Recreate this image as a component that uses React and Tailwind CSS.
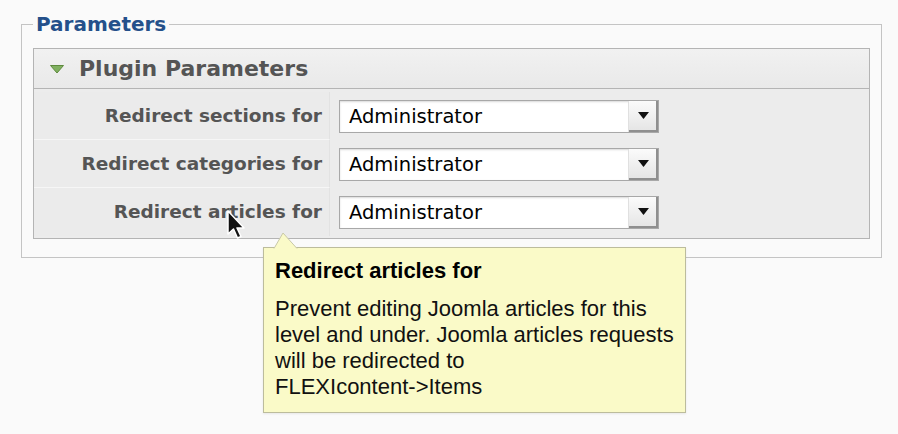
import React from "react";

const rows = ["Redirect sections for", "Redirect categories for", "Redirect articles for"];

const SelectBox = () => (
  <div className="flex h-[33px] w-[320px] items-stretch border border-[#a8a8a8] bg-white shadow-[inset_0_1px_2px_rgba(0,0,0,0.15)]">
    <div className="flex-1 pl-[9px] text-[19.5px] leading-[31px] text-black [font-family:'DejaVu_Sans',sans-serif]">
      Administrator
    </div>
    <div className="flex w-[30px] items-center justify-center border-l border-[#e0e0e0] bg-gradient-to-b from-[#fbfbfb] to-[#e4e4e4] shadow-[inset_-2px_-2px_0_#8f8f8f]">
      <svg width="11" height="8" viewBox="0 0 11 8">
        <path d="M0 0 L11 0 L5.5 7 Z" fill="#111" />
      </svg>
    </div>
  </div>
);

export default function App() {
  return (
    <div className="relative h-[434px] w-[898px] overflow-hidden bg-[#fafafa] pt-[11px] [font-family:'DejaVu_Sans',sans-serif]">
      <fieldset className="ml-[21px] w-[861px] border border-[#c4c4c4] px-[11px] pb-[18px] pt-[11px]">
        <legend className="px-[3px] text-[20px] font-bold leading-[26px] text-[#24508a]">
          Parameters
        </legend>

        {/* Plugin panel */}
        <div className="border border-[#b4b4b4] bg-[#ececec]">
          <div className="flex h-[40px] items-center gap-[15px] border-b border-[#b4b4b4] bg-gradient-to-b from-[#f1f1f1] to-[#e9e9e9] pl-[16px]">
            <svg width="14" height="9" viewBox="0 0 14 9" className="mt-[2px]">
              <path d="M0.5 0.5 L13.5 0.5 L7 8 Z" fill="#80b060" stroke="#5e8a3e" strokeWidth="1" />
            </svg>
            <span className="text-[22px] font-bold text-[#555]">Plugin Parameters</span>
          </div>

          <div className="pt-[3px] pb-[2px]">
            {rows.map((label, i) => (
              <div key={label} className="flex h-[48px] items-center">
                <div
                  className={`flex h-full w-[296px] items-center justify-end border-r border-[#e2e2e2] bg-[#ebebeb] pr-[7px] text-[18.5px] font-bold text-[#555] ${
                    i < rows.length - 1 ? "border-b border-b-[#f6f6f6]" : ""
                  }`}
                >
                  {label}
                </div>
                <div className="pl-[9px]">
                  <SelectBox />
                </div>
              </div>
            ))}
          </div>
        </div>
      </fieldset>

      {/* Mouse cursor */}
      <svg className="absolute left-[226px] top-[210px]" width="20" height="32" viewBox="0 0 20 32">
        <path
          d="M2 1 L2 24 L7.5 19 L11.5 28 L15 26.5 L11 18 L18 18 Z"
          fill="#111"
          stroke="#fff"
          strokeWidth="1.5"
          strokeLinejoin="round"
        />
      </svg>

      {/* Tooltip */}
      <div className="absolute left-[263px] top-[247px] h-[166px] w-[423px] border border-[#bcbc9c] bg-[#fafac8] px-[11px] pt-[10px] text-black [font-family:'Liberation_Sans',Arial,sans-serif] shadow-[0_1px_2px_rgba(0,0,0,0.08)]">
        <svg className="absolute -top-[16px] left-[9px]" width="26" height="17" viewBox="0 0 26 17">
          <path d="M1 16.5 L10 1 L24 16.5" fill="#fafac8" stroke="#c8c8a8" strokeWidth="1" />
        </svg>
        <div className="text-[22px] font-bold leading-[26px]">Redirect articles for</div>
        <div className="mt-[12px] whitespace-nowrap text-[22px] leading-[26px] text-[#111]">
          Prevent editing Joomla articles for this
          <br />
          level and under. Joomla articles requests
          <br />
          will be redirected to
          <br />
          FLEXIcontent-&gt;Items
        </div>
      </div>
    </div>
  );
}
